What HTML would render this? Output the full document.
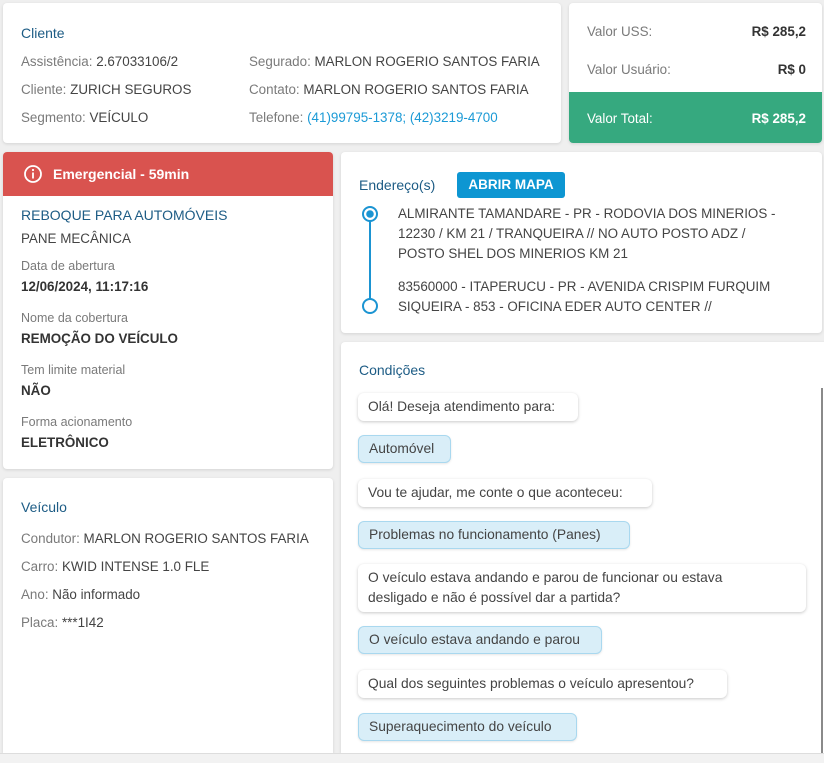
<!DOCTYPE html>
<html><head><meta charset="utf-8"><style>
*{margin:0;padding:0;box-sizing:border-box}
html,body{width:824px;height:763px;overflow:hidden}
body{background:#efefef;font-family:"Liberation Sans",sans-serif;position:relative;color:#444;font-size:13.4px}
.card{position:absolute;background:#fff;border-radius:4px;box-shadow:0 1px 3px rgba(0,0,0,.12)}
.a{position:absolute;white-space:nowrap}
.t{color:#1d5c85;font-size:14px}
.l{color:#7a7a7a}
.v{color:#444}
.sm{font-size:12.5px;color:#7a7a7a}
.b{font-weight:bold;color:#333}
.bub{position:absolute;left:17px;background:#fff;border-radius:6px;box-shadow:0 1px 3px rgba(0,0,0,.22);padding:0 10px;line-height:28px;font-size:13.8px;color:#444;white-space:nowrap}
.blue{background:#d9eef8;border:1px solid #a9d8ef;box-shadow:0 1px 2px rgba(0,0,0,.1);line-height:26px}
</style></head><body>

<div class="card" style="left:3px;top:3px;width:558px;height:140px">
 <div class="a t" style="left:18px;top:22px">Cliente</div>
 <div class="a" style="left:18px;top:51px"><span class="l">Assistência:</span> <span class="v">2.67033106/2</span></div>
 <div class="a" style="left:18px;top:79px"><span class="l">Cliente:</span> <span class="v">ZURICH SEGUROS</span></div>
 <div class="a" style="left:18px;top:107px"><span class="l">Segmento:</span> <span class="v">VEÍCULO</span></div>
 <div class="a" style="left:246px;top:51px"><span class="l">Segurado:</span> <span class="v">MARLON ROGERIO SANTOS FARIA</span></div>
 <div class="a" style="left:246px;top:79px"><span class="l">Contato:</span> <span class="v">MARLON ROGERIO SANTOS FARIA</span></div>
 <div class="a" style="left:246px;top:107px"><span class="l">Telefone:</span> <span style="color:#1b9ad6">(41)99795-1378; (42)3219-4700</span></div>
</div>

<div class="card" style="left:569px;top:3px;width:253px;height:140px;overflow:hidden">
 <div class="a l" style="left:18px;top:21px">Valor USS:</div>
 <div class="a b" style="right:16px;top:21px">R$ 285,2</div>
 <div class="a l" style="left:18px;top:59px">Valor Usuário:</div>
 <div class="a b" style="right:16px;top:59px">R$ 0</div>
 <div style="position:absolute;left:0;top:89px;width:100%;height:51px;background:#36a97f"></div>
 <div class="a" style="left:18px;top:108px;color:#fff">Valor Total:</div>
 <div class="a" style="right:16px;top:108px;color:#fff;font-weight:bold">R$ 285,2</div>
</div>

<div class="card" style="left:3px;top:152px;width:330px;height:317px;overflow:hidden">
 <div style="position:absolute;left:0;top:0;width:100%;height:44px;background:#d9534f"></div>
 <svg class="a" style="left:20px;top:12px" width="20" height="20" viewBox="0 0 20 20"><circle cx="10" cy="10" r="8" fill="none" stroke="#fff" stroke-width="1.8"/><rect x="9.1" y="8.5" width="1.8" height="6" fill="#fff"/><circle cx="10" cy="6" r="1.1" fill="#fff"/></svg>
 <div class="a" style="left:50px;top:14px;color:#fff;font-weight:bold;font-size:14px">Emergencial - 59min</div>
 <div class="a t" style="left:18px;top:55px">REBOQUE PARA AUTOMÓVEIS</div>
 <div class="a v" style="left:18px;top:79px">PANE MECÂNICA</div>
 <div class="a sm" style="left:18px;top:107px">Data de abertura</div>
 <div class="a b" style="left:18px;top:127px">12/06/2024, 11:17:16</div>
 <div class="a sm" style="left:18px;top:159px">Nome da cobertura</div>
 <div class="a b" style="left:18px;top:179px">REMOÇÃO DO VEÍCULO</div>
 <div class="a sm" style="left:18px;top:211px">Tem limite material</div>
 <div class="a b" style="left:18px;top:231px">NÃO</div>
 <div class="a sm" style="left:18px;top:263px">Forma acionamento</div>
 <div class="a b" style="left:18px;top:283px">ELETRÔNICO</div>
</div>

<div class="card" style="left:3px;top:478px;width:330px;height:275px;border-radius:4px 4px 0 0">
 <div class="a t" style="left:18px;top:21px">Veículo</div>
 <div class="a" style="left:18px;top:53px"><span class="l">Condutor:</span> <span class="v">MARLON ROGERIO SANTOS FARIA</span></div>
 <div class="a" style="left:18px;top:81px"><span class="l">Carro:</span> <span class="v">KWID INTENSE 1.0 FLE</span></div>
 <div class="a" style="left:18px;top:109px"><span class="l">Ano:</span> <span class="v">Não informado</span></div>
 <div class="a" style="left:18px;top:137px"><span class="l">Placa:</span> <span class="v">***1I42</span></div>
</div>

<div class="card" style="left:341px;top:152px;width:481px;height:181px">
 <div class="a t" style="left:18px;top:25px">Endereço(s)</div>
 <div class="a" style="left:116px;top:20px;width:108px;height:26px;background:#0d96d2;border-radius:3px;color:#fff;font-weight:bold;font-size:13.5px;text-align:center;line-height:26px">ABRIR MAPA</div>
 <svg class="a" style="left:19px;top:52px" width="20" height="112"><line x1="10" y1="10" x2="10" y2="100" stroke="#1b94d2" stroke-width="2"/><circle cx="10" cy="10" r="7" fill="#fff" stroke="#1b94d2" stroke-width="2"/><circle cx="10" cy="10" r="3.8" fill="#1b94d2"/><circle cx="10" cy="102" r="7" fill="#fff" stroke="#1b94d2" stroke-width="2"/></svg>
 <div class="a v" style="left:57px;top:52px;line-height:20px;white-space:normal;width:385px">ALMIRANTE TAMANDARE - PR - RODOVIA DOS MINERIOS - 12230 / KM 21 / TRANQUEIRA // NO AUTO POSTO ADZ / POSTO SHEL DOS MINERIOS KM 21</div>
 <div class="a v" style="left:57px;top:125px;line-height:20px;white-space:normal;width:400px">83560000 - ITAPERUCU - PR - AVENIDA CRISPIM FURQUIM SIQUEIRA - 853 - OFICINA EDER AUTO CENTER //</div>
</div>

<div class="card" style="left:341px;top:342px;width:485px;height:411px;border-radius:4px 0 0 0">
 <div class="a t" style="left:18px;top:20px">Condições</div>
 <div style="position:absolute;left:480px;top:46px;width:2px;height:365px;background:#8a8a8a"></div>
 <div class="bub" style="top:51px;width:220px">Olá! Deseja atendimento para:</div>
 <div class="bub blue" style="top:93px;width:93px">Automóvel</div>
 <div class="bub" style="top:137px;width:294px">Vou te ajudar, me conte o que aconteceu:</div>
 <div class="bub blue" style="top:179px;width:272px">Problemas no funcionamento (Panes)</div>
 <div class="bub" style="top:222px;width:448px;line-height:20px;padding-top:4px;padding-right:50px;height:48px;white-space:normal">O veículo estava andando e parou de funcionar ou estava desligado e não é possível dar a partida?</div>
 <div class="bub blue" style="top:284px;width:244px">O veículo estava andando e parou</div>
 <div class="bub" style="top:328px;width:369px">Qual dos seguintes problemas o veículo apresentou?</div>
 <div class="bub blue" style="top:371px;width:219px">Superaquecimento do veículo</div>
</div>
<div style="position:absolute;left:0;top:753px;width:824px;height:10px;background:#f2f2f2;border-top:1px solid #ddd"></div>
</body></html>
